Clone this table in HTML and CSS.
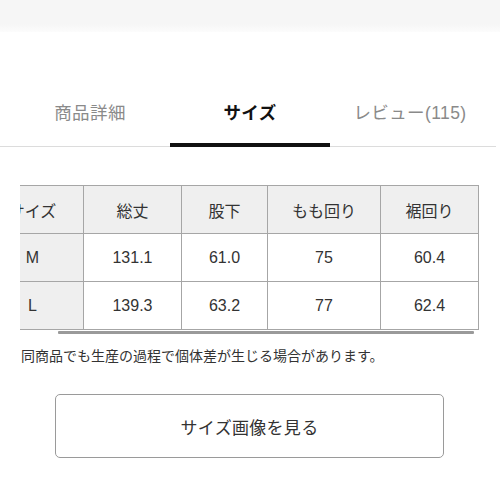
FILE: index.html
```html
<!DOCTYPE html>
<html lang="ja">
<head>
<meta charset="utf-8">
<link rel="stylesheet" href="styles.css">
</head>
<body>
<div class="topband"></div>
<nav class="tabs">
  <div class="tab">商品詳細</div>
  <div class="tab active">サイズ</div>
  <div class="tab">レビュー(115)</div>
</nav>
<div class="table-wrap">
  <table class="size-table">
    <colgroup>
      <col class="c0"><col class="c1"><col class="c2"><col class="c3"><col class="c4">
    </colgroup>
    <tr class="head">
      <th>サイズ</th><th>総丈</th><th>股下</th><th>もも回り</th><th>裾回り</th>
    </tr>
    <tr>
      <th>M</th><td>131.1</td><td>61.0</td><td>75</td><td>60.4</td>
    </tr>
    <tr>
      <th>L</th><td>139.3</td><td>63.2</td><td>77</td><td>62.4</td>
    </tr>
  </table>
</div>
<div class="scrollbar"></div>
<p class="note">同商品でも生産の過程で個体差が生じる場合があります。</p>
<button class="view-btn">サイズ画像を見る</button>
</body>
</html>
```

FILE: styles.css
```css
html, body {
  margin: 0;
  padding: 0;
  background: #fff;
}
body {
  font-family: "Liberation Sans", "Noto Sans CJK JP", sans-serif;
  color: #333;
  width: 500px;
}
.topband {
  height: 32px;
  background: linear-gradient(to bottom, #f6f6f6 0, #f6f6f6 24px, #fcfcfc 32px);
}
.tabs {
  display: grid;
  grid-template-columns: repeat(3, 160px);
  padding: 0 10px;
  margin-top: 64px;
  border-bottom: 1px solid #dcdcdc;
  width: 496px;
  box-sizing: border-box;
}
.tab {
  position: relative;
  text-align: center;
  font-size: 17.5px;
  line-height: 34px;
  height: 50px;
  color: #8a8a8a;
  letter-spacing: 0.4px;
}
.tab.active {
  color: #111;
  font-weight: bold;
}
.tab.active::after {
  content: "";
  position: absolute;
  left: 0;
  right: 0;
  bottom: -1px;
  height: 4px;
  background: #111;
}
.table-wrap {
  margin: 38px 0 0 20px;
  width: 459px;
  overflow: hidden;
}
.size-table {
  margin-left: -39px;
  border-collapse: collapse;
  table-layout: fixed;
  width: 498px;
  font-size: 16px;
  color: #333;
}
.c0 { width: 102px; }
.c1 { width: 98px; }
.c2 { width: 86px; }
.c3 { width: 113px; }
.c4 { width: 98px; }
.size-table th,
.size-table td {
  border: 1px solid #a6a6a6;
  height: 47px;
  padding: 0;
  text-align: center;
  font-weight: normal;
}
.size-table th {
  background: #efefef;
}
.scrollbar {
  margin: 1px 0 0 58px;
  width: 416px;
  height: 3px;
  background: #9a9a9a;
  border-radius: 1px;
}
.note {
  margin: 12px 0 0 21px;
  font-size: 14px;
  line-height: 20px;
  color: #333;
}
.view-btn {
  display: block;
  margin: 28px 0 0 55px;
  width: 389px;
  height: 64px;
  border: 1px solid #9a9a9a;
  border-radius: 5px;
  background: #fff;
  font-family: "Liberation Sans", "Noto Sans CJK JP", sans-serif;
  font-size: 17px;
  color: #333;
  letter-spacing: 0.3px;
}
```
